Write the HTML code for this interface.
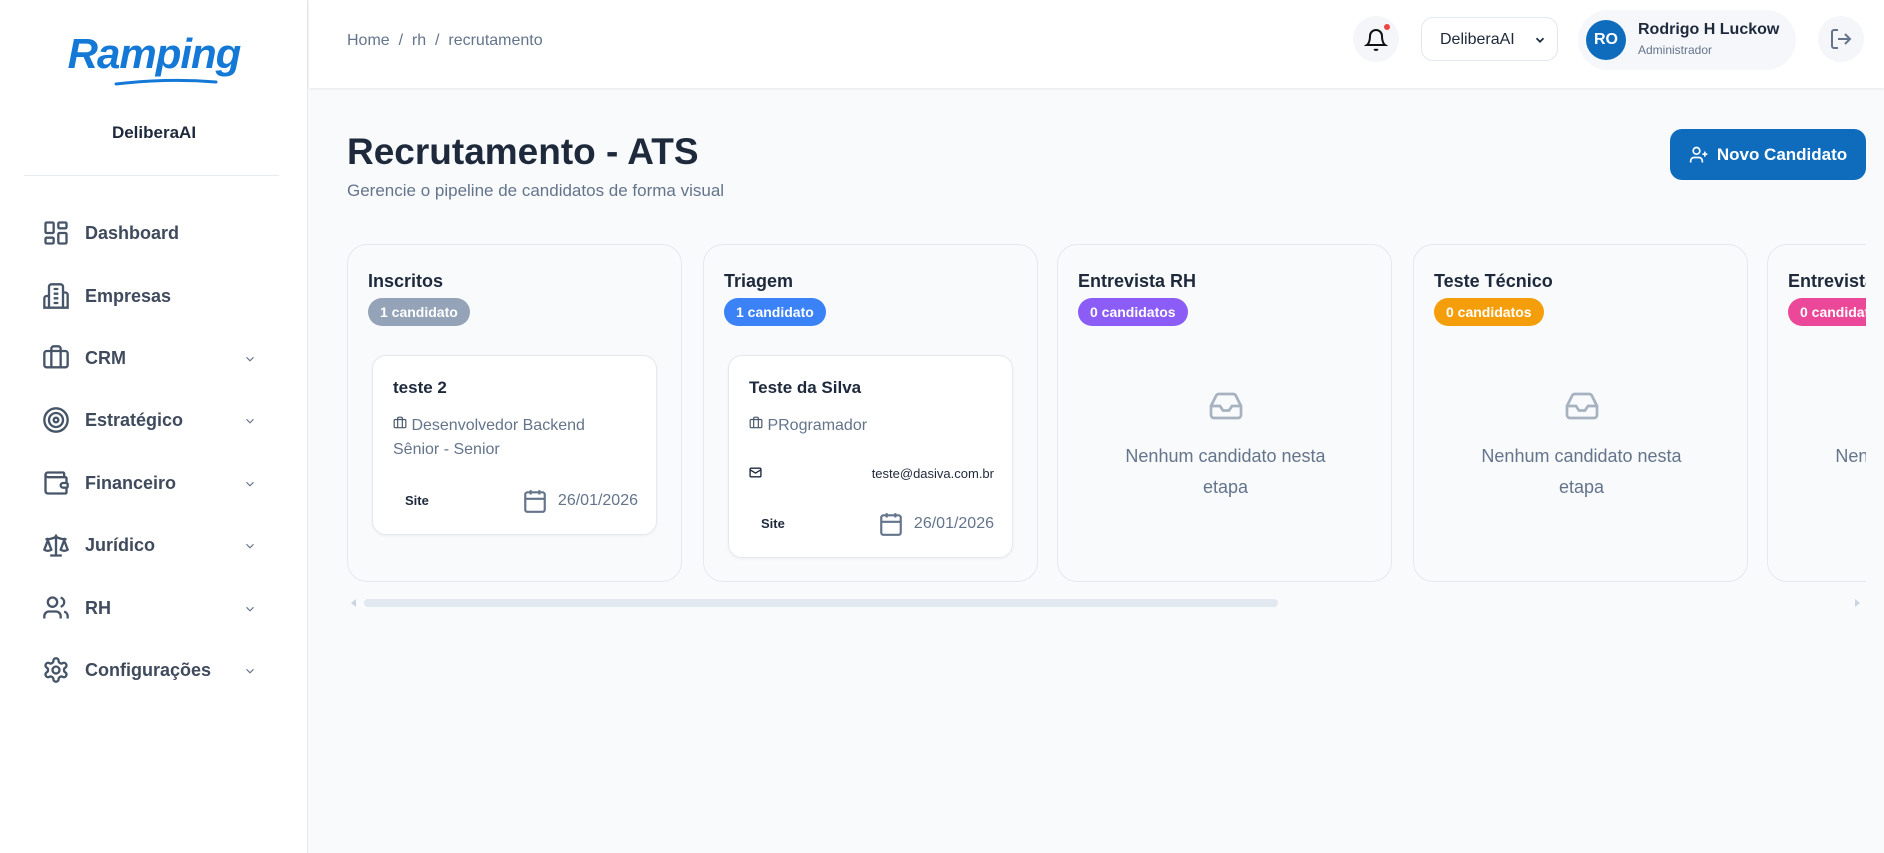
<!DOCTYPE html>
<html><head><meta charset="utf-8"><style>
*{box-sizing:border-box;margin:0;padding:0}
body{width:1884px;height:853px;overflow:hidden;font-family:"Liberation Sans",sans-serif;background:#f8fafc;position:relative;color:#1e293b}
.side{position:absolute;left:0;top:0;width:308px;height:853px;background:#fff;border-right:1px solid #e5e7eb}
.logo{position:absolute;left:0;width:308px;top:30px;text-align:center;font-family:"Liberation Sans",sans-serif;font-style:italic;font-weight:bold;font-size:42px;color:#1479d6;letter-spacing:-1px}
.org{position:absolute;top:123px;width:308px;text-align:center;font-size:17px;font-weight:bold;color:#1e293b}
.div{position:absolute;top:175px;left:24px;width:255px;border-top:1px solid #e8ebef}
.nav{position:absolute;left:42px;height:30px;width:220px;display:flex;align-items:center;font-size:18px;font-weight:bold;color:#3f4a5c}
.nav svg.i{width:28px;height:28px;margin-right:15px}
.nav .ch{position:absolute;left:201px;top:9px}
.hdr{position:absolute;left:309px;top:0;right:0;height:88px;background:#fff;box-shadow:0 1px 3px rgba(0,0,0,.08)}
.bc{position:absolute;left:347px;top:32px;font-size:16px;color:#64748b}
.round{position:absolute;border-radius:50%;background:#f4f6f9}
.sel{position:absolute;left:1421px;top:17px;width:137px;height:44px;border:1px solid #e2e8f0;border-radius:12px;background:#fff;font-size:16px;color:#1e293b;padding:13px 0 0 18px}
.pill{position:absolute;left:1578px;top:10px;width:218px;height:60px;border-radius:30px;background:#f5f7fa}
h1{position:absolute;left:347px;top:131px;font-size:37px;font-weight:bold;color:#1e293b}
.sub{position:absolute;left:347px;top:181px;font-size:17px;color:#64748b}
.btn{position:absolute;left:1670px;top:129px;width:196px;height:51px;border-radius:12px;background:#0f6cbd;color:#fff;font-weight:bold;font-size:17px;display:flex;align-items:center;justify-content:center;gap:8px}
.clip{position:absolute;left:347px;top:244px;width:1519px;height:340px;overflow:hidden}
.col{position:absolute;top:0;width:335px;height:338px;border:1px solid #e5e8ee;border-radius:20px;background:#f8fafc}
.col h3{position:absolute;left:20px;top:26px;font-size:18px;font-weight:bold;color:#1e293b}
.bd{position:absolute;left:20px;top:53px;height:28px;border-radius:14px;color:#fff;font-size:14px;font-weight:bold;padding:6px 12px 0}
.card{position:absolute;left:24px;top:110px;width:285px;background:#fff;border:1px solid #e5e8ee;border-radius:14px;box-shadow:0 1px 3px rgba(0,0,0,.05)}
.card .n{position:absolute;left:20px;top:22px;font-size:17px;font-weight:bold;color:#1e293b}
.card .r{position:absolute;left:20px;font-size:16px;color:#64748b;line-height:24px}
.card .s{position:absolute;left:32px;font-size:13px;font-weight:bold;color:#1e293b}
.card .d{position:absolute;right:18px;font-size:16px;color:#64748b;display:flex;align-items:center;gap:10px}
.emp{position:absolute;left:0;width:335px;top:140px;text-align:center;color:#64748b;font-size:18px;line-height:31px}
</style></head><body>
<div class="side">
 <div class="logo">Ramping</div>
 <svg style="position:absolute;left:112px;top:76px" width="110" height="12" viewBox="0 0 110 12" fill="none" stroke="#1479d6" stroke-width="3" stroke-linecap="round"><path d="M4 8 Q55 2 104 6"/></svg>
 <div class="org">DeliberaAI</div>
 <div class="div"></div>
 <div class="nav" style="top:218px"><svg class="i" viewBox="0 0 24 24" fill="none" stroke="#475569" stroke-width="2"><rect x="3" y="3" width="7" height="9" rx="1"/><rect x="14" y="3" width="7" height="5" rx="1"/><rect x="14" y="12" width="7" height="9" rx="1"/><rect x="3" y="16" width="7" height="5" rx="1"/></svg>Dashboard</div>
 <div class="nav" style="top:281px"><svg class="i" viewBox="0 0 24 24" fill="none" stroke="#475569" stroke-width="2"><path d="M6 22V4a2 2 0 0 1 2-2h8a2 2 0 0 1 2 2v18z"/><path d="M6 12H4a2 2 0 0 0-2 2v8h4M18 9h2a2 2 0 0 1 2 2v11h-4M10 6h4M10 10h4M10 14h4M10 18h4"/></svg>Empresas</div>
 <div class="nav" style="top:343px"><svg class="i" viewBox="0 0 24 24" fill="none" stroke="#475569" stroke-width="2"><path d="M16 20V4a2 2 0 0 0-2-2h-4a2 2 0 0 0-2 2v16"/><rect x="2" y="6" width="20" height="14" rx="2"/></svg>CRM<svg class="ch" width="14" height="14" viewBox="0 0 24 24" fill="none" stroke="#64748b" stroke-width="2"><path d="m6 9 6 6 6-6"/></svg></div>
 <div class="nav" style="top:405px"><svg class="i" viewBox="0 0 24 24" fill="none" stroke="#475569" stroke-width="2"><circle cx="12" cy="12" r="10"/><circle cx="12" cy="12" r="6"/><circle cx="12" cy="12" r="2"/></svg>Estratégico<svg class="ch" width="14" height="14" viewBox="0 0 24 24" fill="none" stroke="#64748b" stroke-width="2"><path d="m6 9 6 6 6-6"/></svg></div>
 <div class="nav" style="top:468px"><svg class="i" viewBox="0 0 24 24" fill="none" stroke="#475569" stroke-width="2"><path d="M19 7V4a1 1 0 0 0-1-1H5a2 2 0 0 0 0 4h15a1 1 0 0 1 1 1v4h-3a2 2 0 0 0 0 4h3a1 1 0 0 0 1-1v-2a1 1 0 0 0-1-1"/><path d="M3 5v14a2 2 0 0 0 2 2h15a1 1 0 0 0 1-1v-4"/></svg>Financeiro<svg class="ch" width="14" height="14" viewBox="0 0 24 24" fill="none" stroke="#64748b" stroke-width="2"><path d="m6 9 6 6 6-6"/></svg></div>
 <div class="nav" style="top:530px"><svg class="i" viewBox="0 0 24 24" fill="none" stroke="#475569" stroke-width="2"><path d="m16 16 3-8 3 8c-.87.65-1.92 1-3 1s-2.130-.35-3-1ZM2 16l3-8 3 8c-.87.65-1.920 1-3 1s-2.13-.35-3-1ZM7 21h10M12 3v18M3 7h2c2 0 5-1 7-2 2 1 5 2 7 2h2"/></svg>Jurídico<svg class="ch" width="14" height="14" viewBox="0 0 24 24" fill="none" stroke="#64748b" stroke-width="2"><path d="m6 9 6 6 6-6"/></svg></div>
 <div class="nav" style="top:593px"><svg class="i" viewBox="0 0 24 24" fill="none" stroke="#475569" stroke-width="2"><path d="M16 21v-2a4 4 0 0 0-4-4H6a4 4 0 0 0-4 4v2"/><circle cx="9" cy="7" r="4"/><path d="M22 21v-2a4 4 0 0 0-3-3.87M16 3.13a4 4 0 0 1 0 7.75"/></svg>RH<svg class="ch" width="14" height="14" viewBox="0 0 24 24" fill="none" stroke="#64748b" stroke-width="2"><path d="m6 9 6 6 6-6"/></svg></div>
 <div class="nav" style="top:655px"><svg class="i" viewBox="0 0 24 24" fill="none" stroke="#475569" stroke-width="2"><path d="M12.22 2h-.44a2 2 0 0 0-2 2v.18a2 2 0 0 1-1 1.73l-.43.25a2 2 0 0 1-2 0l-.15-.08a2 2 0 0 0-2.73.73l-.22.38a2 2 0 0 0 .73 2.730l.15.1a2 2 0 0 1 1 1.72v.51a2 2 0 0 1-1 1.74l-.15.09a2 2 0 0 0-.73 2.73l.22.38a2 2 0 0 0 2.73.73l.15-.08a2 2 0 0 1 2 0l.43.25a2 2 0 0 1 1 1.73V20a2 2 0 0 0 2 2h.44a2 2 0 0 0 2-2v-.18a2 2 0 0 1 1-1.73l.43-.25a2 2 0 0 1 2 0l.15.08a2 2 0 0 0 2.73-.73l.22-.39a2 2 0 0 0-.73-2.73l-.15-.08a2 2 0 0 1-1-1.74v-.5a2 2 0 0 1 1-1.74l.15-.09a2 2 0 0 0 .73-2.73l-.22-.38a2 2 0 0 0-2.73-.73l-.15.08a2 2 0 0 1-2 0l-.43-.25a2 2 0 0 1-1-1.73V4a2 2 0 0 0-2-2z"/><circle cx="12" cy="12" r="3"/></svg>Configurações<svg class="ch" width="14" height="14" viewBox="0 0 24 24" fill="none" stroke="#64748b" stroke-width="2"><path d="m6 9 6 6 6-6"/></svg></div>
</div>
<div class="hdr"></div>
<div class="bc">Home &nbsp;/&nbsp; rh &nbsp;/&nbsp; recrutamento</div>
<div class="round" style="left:1353px;top:16px;width:46px;height:46px"><svg style="position:absolute;left:11px;top:11px" width="24" height="26" viewBox="0 0 24 24" fill="none" stroke="#111" stroke-width="2"><path d="M6 8a6 6 0 0 1 12 0c0 7 3 9 3 9H3s3-2 3-9M10.3 21a1.94 1.94 0 0 0 3.4 0"/></svg><div style="position:absolute;left:31px;top:8px;width:6px;height:6px;border-radius:50%;background:#ef4444"></div></div>
<div class="sel">DeliberaAI<svg style="position:absolute;right:10px;top:15px" width="14" height="14" viewBox="0 0 24 24" fill="none" stroke="#1e293b" stroke-width="3"><path d="m6 9 6 6 6-6"/></svg></div>
<div class="pill"><div style="position:absolute;left:8px;top:10px;width:40px;height:40px;border-radius:50%;background:#0f6cbd;color:#fff;font-weight:bold;font-size:16px;text-align:center;line-height:40px">RO</div><div style="position:absolute;left:60px;top:11px;font-size:16px;font-weight:bold;color:#1e293b">Rodrigo H Luckow</div><div style="position:absolute;left:60px;top:33px;font-size:12px;color:#64748b">Administrador</div></div>
<div class="round" style="left:1818px;top:16px;width:46px;height:46px"><svg style="position:absolute;left:11px;top:11px" width="24" height="24" viewBox="0 0 24 24" fill="none" stroke="#64748b" stroke-width="2"><path d="M9 21H5a2 2 0 0 1-2-2V5a2 2 0 0 1 2-2h4M16 17l5-5-5-5M21 12H9"/></svg></div>
<h1>Recrutamento - ATS</h1>
<div class="sub">Gerencie o pipeline de candidatos de forma visual</div>
<div class="btn"><svg width="20" height="20" viewBox="0 0 24 24" fill="none" stroke="#fff" stroke-width="2"><path d="M16 21v-2a4 4 0 0 0-4-4H6a4 4 0 0 0-4 4v2"/><circle cx="9" cy="7" r="4"/><path d="M19 8v6M22 11h-6"/></svg>Novo Candidato</div>
<div class="clip">
 <div class="col" style="left:0"><h3>Inscritos</h3><div class="bd" style="background:#94a3b8">1 candidato</div>
  <div class="card" style="height:180px"><div class="n">teste 2</div>
   <div class="r" style="top:58px"><svg width="14" height="14" viewBox="0 0 24 24" fill="none" stroke="#475569" stroke-width="2"><path d="M16 20V4a2 2 0 0 0-2-2h-4a2 2 0 0 0-2 2v16"/><rect x="2" y="6" width="20" height="14" rx="2"/></svg> Desenvolvedor Backend<br>Sênior - Senior</div>
   <div class="s" style="top:137px">Site</div>
   <div class="d" style="top:131px"><svg width="26" height="28" viewBox="0 0 24 24" fill="none" stroke="#64748b" stroke-width="2"><rect x="3" y="4" width="18" height="18" rx="2"/><path d="M16 2v4M8 2v4M3 10h18"/></svg>26/01/2026</div></div></div>
 <div class="col" style="left:356px"><h3>Triagem</h3><div class="bd" style="background:#3b82f6">1 candidato</div>
  <div class="card" style="height:203px"><div class="n">Teste da Silva</div>
   <div class="r" style="top:58px"><svg width="14" height="14" viewBox="0 0 24 24" fill="none" stroke="#475569" stroke-width="2"><path d="M16 20V4a2 2 0 0 0-2-2h-4a2 2 0 0 0-2 2v16"/><rect x="2" y="6" width="20" height="14" rx="2"/></svg> PRogramador</div>
   <svg style="position:absolute;left:20px;top:110px" width="13" height="13" viewBox="0 0 24 24" fill="none" stroke="#1e293b" stroke-width="2.5"><rect x="2" y="4" width="20" height="16" rx="2"/><path d="m22 7-10 6L2 7"/></svg>
   <div style="position:absolute;right:18px;top:110px;font-size:13px;color:#1e293b">teste@dasiva.com.br</div>
   <div class="s" style="top:160px">Site</div>
   <div class="d" style="top:154px"><svg width="26" height="28" viewBox="0 0 24 24" fill="none" stroke="#64748b" stroke-width="2"><rect x="3" y="4" width="18" height="18" rx="2"/><path d="M16 2v4M8 2v4M3 10h18"/></svg>26/01/2026</div></div></div>
 <div class="col" style="left:710px"><h3>Entrevista RH</h3><div class="bd" style="background:#8b5cf6">0 candidatos</div>
  <svg style="position:absolute;left:150px;top:143px" width="36" height="36" viewBox="0 0 24 24" fill="none" stroke="#a7b2c1" stroke-width="1.8"><path d="M22 12h-6l-2 3h-4l-2-3H2"/><path d="M5.45 5.11 2 12v6a2 2 0 0 0 2 2h16a2 2 0 0 0 2-2v-6l-3.45-6.89A2 2 0 0 0 16.76 4H7.24a2 2 0 0 0-1.79 1.11z"/></svg>
  <div class="emp" style="top:196px">Nenhum candidato nesta<br>etapa</div></div>
 <div class="col" style="left:1066px"><h3>Teste Técnico</h3><div class="bd" style="background:#f59e0b">0 candidatos</div>
  <svg style="position:absolute;left:150px;top:143px" width="36" height="36" viewBox="0 0 24 24" fill="none" stroke="#a7b2c1" stroke-width="1.8"><path d="M22 12h-6l-2 3h-4l-2-3H2"/><path d="M5.45 5.11 2 12v6a2 2 0 0 0 2 2h16a2 2 0 0 0 2-2v-6l-3.45-6.89A2 2 0 0 0 16.76 4H7.24a2 2 0 0 0-1.79 1.11z"/></svg>
  <div class="emp" style="top:196px">Nenhum candidato nesta<br>etapa</div></div>
 <div class="col" style="left:1420px"><h3>Entrevista Técnica</h3><div class="bd" style="background:#ec4899">0 candidatos</div>
  <div class="emp" style="top:196px">Nenhum candidato nesta<br>etapa</div></div>
</div>
<div style="position:absolute;left:364px;top:599px;width:914px;height:8px;border-radius:4px;background:#e2e8f0"></div>
<div style="position:absolute;left:351px;top:599px;width:0;height:0;border-top:4px solid transparent;border-bottom:4px solid transparent;border-right:5px solid #cbd5e1"></div>
<div style="position:absolute;left:1855px;top:599px;width:0;height:0;border-top:4px solid transparent;border-bottom:4px solid transparent;border-left:5px solid #cbd5e1"></div>
</body></html>
